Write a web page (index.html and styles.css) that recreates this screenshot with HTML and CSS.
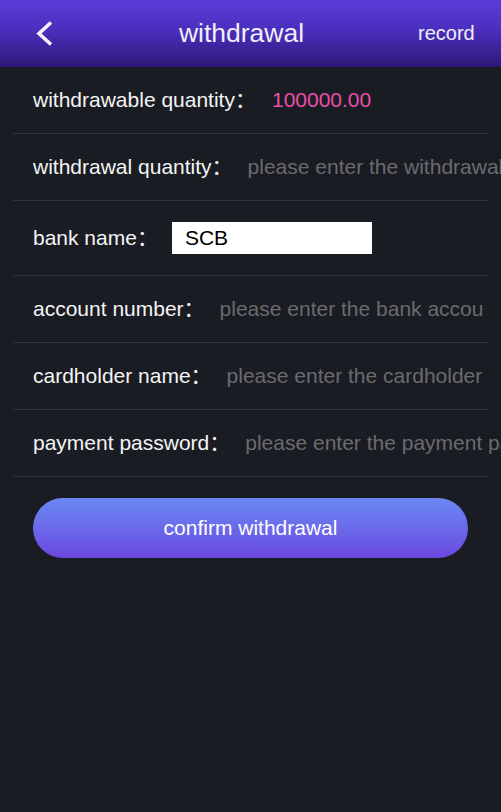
FILE: index.html
```html
<!DOCTYPE html>
<html lang="en">
<head>
<meta charset="utf-8">
<title>withdrawal</title>
<link rel="stylesheet" href="styles.css">
</head>
<body>
<div class="page">
  <header class="topbar">
    <div class="back">
      <svg class="back-icon" width="20" height="28" viewBox="0 0 20 28" aria-hidden="true">
        <polyline points="15,2.5 3,13.5 15,24.5" fill="none" stroke="#f2f2f2" stroke-width="3.6" stroke-linejoin="miter"/>
      </svg>
    </div>
    <div class="title">withdrawal</div>
    <div class="record">record</div>
  </header>

  <div class="form">
    <div class="row">
      <span class="label">withdrawable quantity：</span>
      <span class="value">100000.00</span>
    </div>
    <div class="row">
      <span class="label">withdrawal quantity：</span>
      <input class="field field-wide" type="text" placeholder="please enter the withdrawal quantity">
    </div>
    <div class="row row-bank">
      <span class="label">bank name：</span>
      <div class="bank-box">SCB</div>
    </div>
    <div class="row">
      <span class="label">account number：</span>
      <input class="field field-account" type="text" placeholder="please enter the bank account number">
    </div>
    <div class="row">
      <span class="label">cardholder name：</span>
      <input class="field field-holder" type="text" placeholder="please enter the cardholder name">
    </div>
    <div class="row">
      <span class="label">payment password：</span>
      <input class="field field-wide" type="password" placeholder="please enter the payment password">
    </div>
  </div>

  <div class="actions">
    <button class="confirm" type="button">confirm withdrawal</button>
  </div>
</div>
</body>
</html>
```

FILE: styles.css
```css
html, body {
  margin: 0;
  padding: 0;
  background: #1a1c23;
}
body {
  font-family: "Liberation Sans", Arial, "Noto Sans CJK SC", sans-serif;
  color: #f2f2f2;
  overflow-x: hidden;
}
.page {
  width: 501px;
  min-height: 812px;
  overflow: hidden;
}
.topbar {
  height: 67px;
  display: flex;
  align-items: center;
  background: linear-gradient(180deg, #5a3bd9 0%, #4a2fbd 45%, #2d1878 100%);
}
.back {
  width: 65px;
  box-sizing: border-box;
  padding-left: 36px;
  display: flex;
  align-items: center;
  height: 100%;
}
.back-icon {
  display: block;
  margin-top: 1px;
}
.title {
  flex: 1;
  text-align: center;
  font-size: 26.5px;
  line-height: 30px;
  color: #f0eef8;
  margin-top: -1px;
}
.record {
  width: 83px;
  box-sizing: border-box;
  padding-right: 27px;
  text-align: right;
  font-size: 20px;
  line-height: 24px;
  color: #f0eef8;
  margin-top: -1px;
}
.form {
  margin: 0 13px;
}
.row {
  display: flex;
  align-items: center;
  height: 66px;
  padding-left: 20px;
  border-bottom: 1px solid #33343a;
  white-space: nowrap;
}
.row-bank {
  height: 74px;
}
.label {
  font-size: 21px;
  line-height: 24px;
  color: #f4f4f4;
  flex: none;
}
.value {
  margin-left: 16px;
  font-size: 21px;
  line-height: 24px;
  color: #ea4fa6;
}
.field {
  flex: none;
  width: 267px;
  margin-left: 15px;
  padding: 0;
  border: none;
  outline: none;
  background: transparent;
  font-family: "Liberation Sans", Arial, sans-serif;
  font-size: 21px;
  line-height: 24px;
  height: 24px;
  color: #f4f4f4;
}
.field-wide {
  width: 300px;
}
.field-account {
  width: 264px;
}
.field-holder {
  width: 259px;
}
.field::placeholder {
  color: #6a6b6e;
  opacity: 1;
}
.bank-box {
  flex: none;
  width: 200px;
  height: 32px;
  box-sizing: border-box;
  margin-left: 14px;
  padding-left: 13px;
  background: #ffffff;
  color: #000000;
  font-size: 21px;
  line-height: 32px;
}
.actions {
  padding: 21px 33px 0;
}
.confirm {
  display: block;
  width: 435px;
  height: 60px;
  border: none;
  border-radius: 30px;
  background: linear-gradient(180deg, #6a87f3 0%, #6a6aea 50%, #6b47df 100%);
  color: #ffffff;
  font-family: "Liberation Sans", Arial, sans-serif;
  font-size: 21px;
  cursor: pointer;
}
```
